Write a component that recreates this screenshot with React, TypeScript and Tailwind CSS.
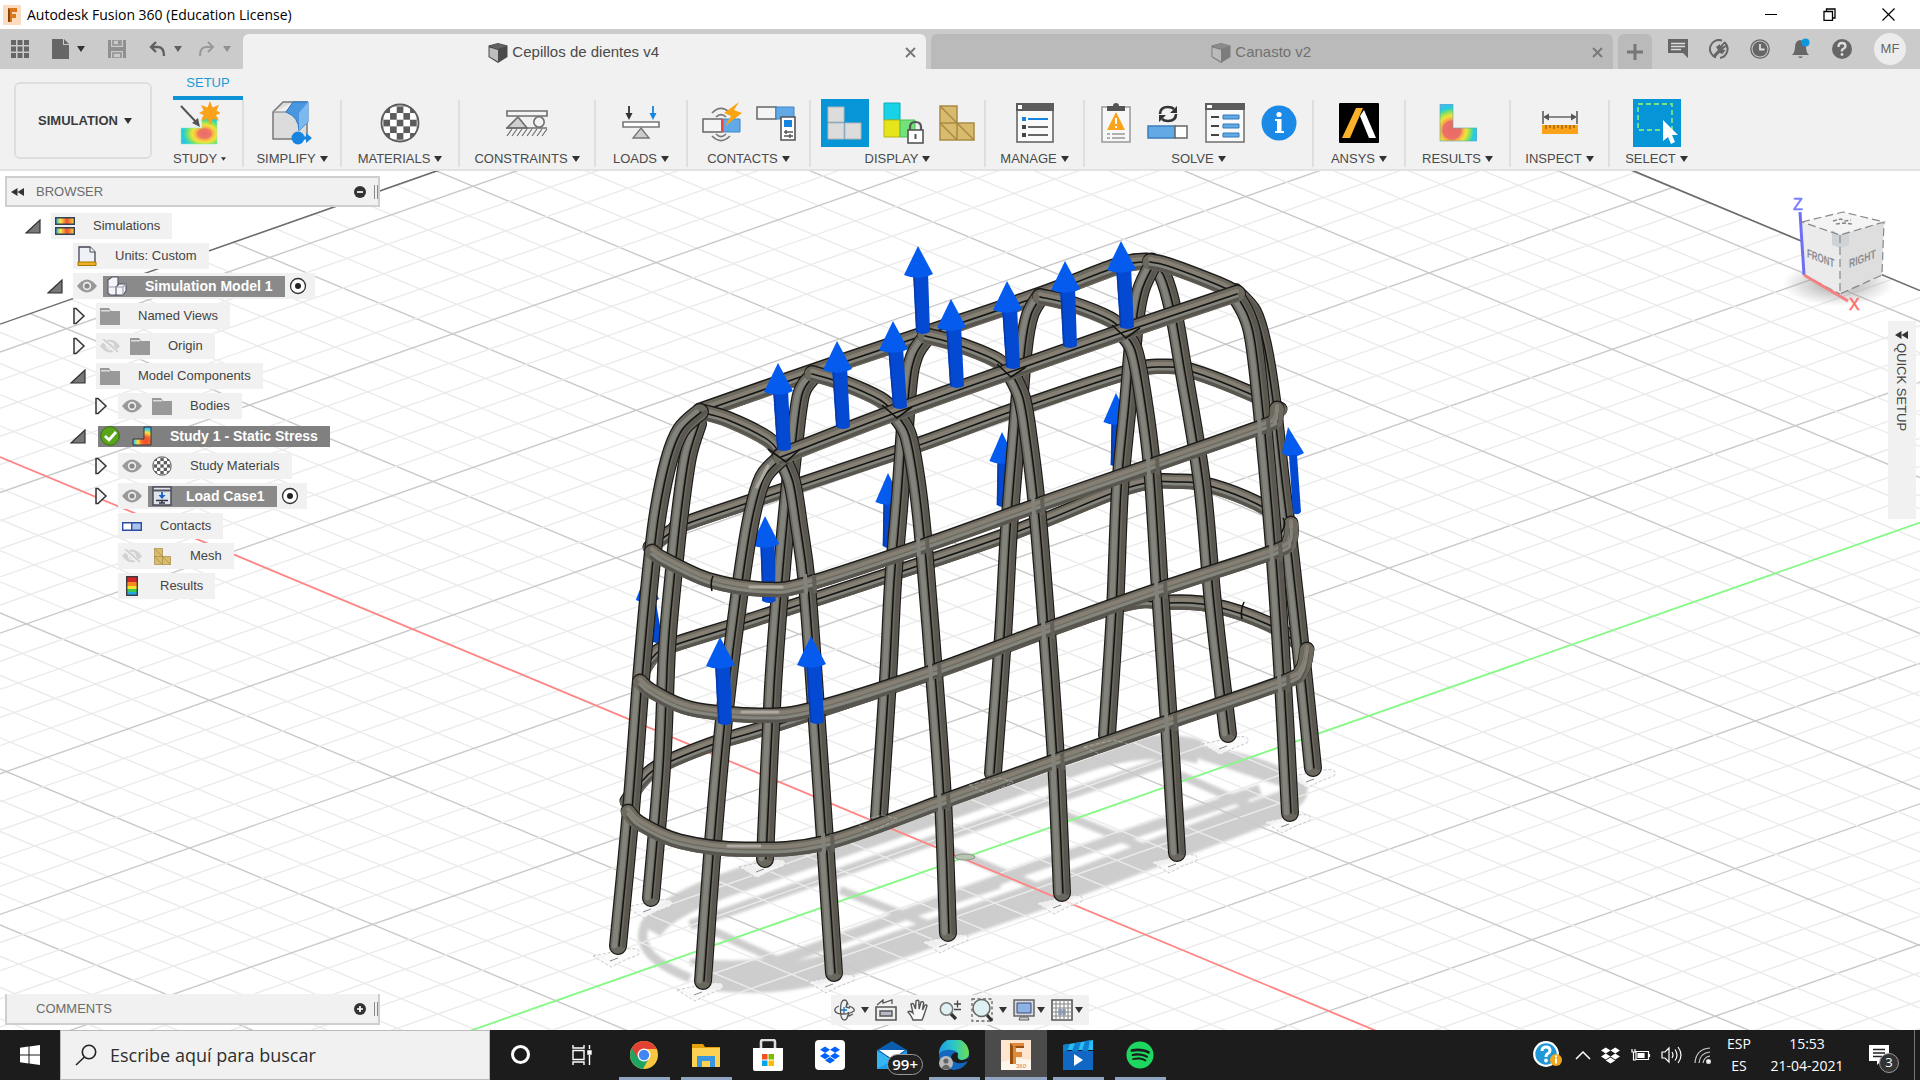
import React from "react";
import { FaDropbox, FaSpotify } from "react-icons/fa";

type Pt = [number, number];

/* ---------- geometry helpers for the 3D viewport ---------- */

function smooth(p: Pt[]): string {
  let d = `M${p[0][0]} ${p[0][1]}`;
  for (let i = 0; i < p.length - 1; i++) {
    const a = p[i - 1] || p[i];
    const b = p[i];
    const c = p[i + 1];
    const e = p[i + 2] || c;
    d += `C${b[0] + (c[0] - a[0]) / 6} ${b[1] + (c[1] - a[1]) / 6} ${c[0] - (e[0] - b[0]) / 6} ${c[1] - (e[1] - b[1]) / 6} ${c[0]} ${c[1]}`;
  }
  return d;
}

const BACK_POSTS: Pt[][] = [
  [[1228, 734], [1213, 603], [1202, 483], [1183, 367], [1173, 310], [1163, 276], [1152, 264]],
  [[1107, 735], [1115, 610], [1120, 490], [1128, 403], [1135, 323], [1141, 290], [1152, 266]],
  [[993, 773], [1003, 637], [1009, 530], [1017, 430], [1024, 347], [1030, 315], [1040, 297]],
  [[879, 817], [888, 680], [893, 583], [900, 497], [908, 390], [914, 357], [924, 340]],
  [[765, 859], [773, 687], [781, 580], [787, 513], [794, 447], [801, 395], [812, 377]],
  [[651, 898], [662, 767], [667, 650], [673, 580], [680, 513], [688, 457], [698, 424]],
];
const RIGHT_BACK_POST: Pt[] = [[1313, 768], [1303, 670], [1291, 560], [1281, 480], [1272, 400], [1263, 345], [1253, 312], [1235, 292]];
const FRONT_POSTS: Pt[][] = [
  [[618, 946], [631, 810], [641, 680], [650, 580], [658, 513], [669, 460], [681, 430], [700, 412]],
  [[1290, 813], [1283, 682], [1275, 560], [1263, 423], [1254, 343], [1247, 316], [1236, 296]],
  [[1177, 853], [1169, 723], [1160, 590], [1152, 467], [1142, 390], [1134, 350], [1123, 333]],
  [[1062, 893], [1056, 760], [1047, 630], [1037, 507], [1029, 440], [1022, 398], [1010, 372]],
  [[948, 933], [943, 800], [934, 673], [924, 547], [917, 483], [908, 435], [895, 414]],
  [[834, 973], [825, 840], [816, 708], [807, 585], [799, 525], [792, 482], [781, 456]],
  [[703, 981], [713, 843], [725, 710], [740, 590], [751, 520], [763, 478], [781, 458]],
];
const BACK_RINGS: Pt[][] = [
  [[650, 548], [672, 532], [700, 519], [900, 452], [1010, 412], [1127, 373], [1163, 367], [1190, 371], [1248, 393], [1280, 410]],
  [[641, 675], [653, 657], [672, 646], [760, 618], [1000, 538], [1127, 488], [1180, 482], [1213, 487], [1257, 504], [1290, 525]],
  [[627, 802], [643, 780], [663, 765], [717, 743], [767, 728], [933, 673], [1113, 608], [1167, 603], [1213, 606], [1267, 624], [1300, 645]],
];
const FRONT_RINGS: Pt[][] = [
  [[652, 552], [664, 560], [710, 581], [767, 590], [809, 584], [922, 547], [1037, 506], [1152, 466], [1263, 427], [1275, 420], [1277, 409]],
  [[640, 682], [652, 692], [690, 709], [760, 716], [816, 709], [934, 672], [1047, 630], [1160, 590], [1275, 552], [1290, 540], [1291, 524]],
  [[628, 812], [640, 824], [680, 842], [745, 850], [827, 843], [943, 802], [1057, 761], [1170, 722], [1283, 683], [1302, 670], [1307, 650]],
];
const TOP_FAR: Pt[] = [[700, 412], [812, 373], [925, 335], [1040, 296], [1120, 266], [1152, 262]];
const TOP_NEAR: Pt[] = [[781, 457], [895, 413], [1010, 372], [1124, 332], [1237, 294]];
const CROSS: Pt[][] = [
  [[700, 412], [728, 420], [768, 440], [782, 457]],
  [[812, 374], [842, 383], [880, 400], [895, 414]],
  [[925, 336], [955, 344], [995, 360], [1010, 373]],
  [[1040, 297], [1070, 304], [1110, 320], [1124, 333]],
  [[1150, 262], [1168, 266], [1218, 285], [1238, 295]],
];

function Post({ p }: { p: Pt[] }) {
  const d = smooth(p);
  return (
    <g fill="none" strokeLinecap="round">
      <path d={d} stroke="#1d1c1a" strokeWidth="18" />
      <path d={d} stroke="#6a675f" strokeWidth="15.500" />
      <path d={d} stroke="#82847b" strokeWidth="5" transform="translate(-3.500 0)" />
      <path d={d} stroke="#5a574f" strokeWidth="4" transform="translate(5.500 0)" />
      <path d={d} stroke="#121211" strokeWidth="1.500" transform="translate(1 0)" />
    </g>
  );
}

function Rail({ p, seam = true, w = 15 }: { p: Pt[]; seam?: boolean; w?: number }) {
  const d = smooth(p);
  return (
    <g fill="none" strokeLinecap="round">
      <path d={d} stroke="#1d1c1a" strokeWidth={w} transform="translate(0 -1)" />
      <path d={d} stroke="#6d695f" strokeWidth={w - 1} />
      <path d={d} stroke="#857f74" strokeWidth="4" transform="translate(0 -3)" />
      <path d={d} stroke="#57554e" strokeWidth="4" transform="translate(0 5)" />
      <path d={d} stroke="#84857c" strokeWidth="3" transform="translate(0 2)" />
      {seam && <path d={d} stroke="#151514" strokeWidth="1.500" />}
    </g>
  );
}

function Arrow({ t, b, s = 1 }: { t: Pt; b: Pt; s?: number }) {
  const [x, y] = t;
  const h = 29;
  return (
    <g>
      <path d={`M${x - 5 * s} ${y + 26}L${b[0] - 7 * s} ${b[1]}q${7 * s} 4 ${14 * s} 0L${x + 10 * s} ${y + 26}z`} fill="#0349d2" />
      <path d={`M${x - 4 * s} ${y + 28}L${b[0] - 6 * s} ${b[1]}`} stroke="#0b3aa6" strokeWidth="1.500" />
      <path d={`M${x} ${y}L${x - 14 * s} ${y + h}q${14 * s} 6 ${29 * s} -1z`} fill="#045bee" />
    </g>
  );
}

function Grid() {
  const lines: React.ReactNode[] = [];
  for (let i = -30; i <= 31; i++) {
    const major = i % 5 === 0;
    if (i === 0) continue;
    const col = i === 31 ? "#6f6f6f" : major ? "#c9c9c9" : "#ebebeb";
    const w = i === 31 ? 2 : 1.4;
    const g = 1195.6 - 28.12 * i;
    const r = 457 - 31.2 * i;
    lines.push(<path key={`g${i}`} d={`M0 ${g}L1920 ${g - 673}`} stroke={col} strokeWidth={w} />);
    lines.push(<path key={`r${i}`} d={`M0 ${r}L1920 ${r + 800.6}`} stroke={col} strokeWidth={w} />);
  }
  return (
    <g clipPath="url(#floor)">
      {lines}
      <path d="M0 457L1920 1257.6" stroke="#ff8484" strokeWidth="1.800" />
      <path d="M0 1195.600L1920 522.600" stroke="#84f984" strokeWidth="1.800" />
    </g>
  );
}

function Scene() {
  const feet: Pt[] = [[619, 957], [703, 991], [834, 983], [948, 943], [1062, 904], [1177, 863], [1290, 823], [1315, 778], [1228, 745], [765, 868], [652, 908]];
  const ghosts: Pt[] = [[877, 824], [993, 787], [1108, 749]];
  return (
    <svg viewBox="0 171 1920 859" preserveAspectRatio="xMidYMid slice" className="absolute inset-0 h-full w-full" role="img" aria-label="Wire frame model on grid">
      <defs>
        <clipPath id="floor"><path d="M-10 327L1088 -59L1930 294V1100H-10z" /></clipPath>
        <filter id="soft" x="-20%" y="-20%" width="140%" height="140%"><feGaussianBlur stdDeviation="1.500" /></filter>
        <radialGradient id="cubeShadow"><stop offset="0" stopColor="#8a8a8a" stopOpacity=".8" /><stop offset="1" stopColor="#999" stopOpacity="0" /></radialGradient>
      </defs>
      <rect y="171" width="1920" height="859" fill="#fff" />
      <g fill="none" stroke="#cdcdcd" filter="url(#soft)">
        <path d="M700 974Q770 988 850 962L1062 888L1290 802" strokeWidth="28" />
        <path d="M650 930Q665 905 740 880L880 832L1080 762Q1150 738 1200 752" strokeWidth="24" />
        <path d="M1150 745Q1260 755 1300 785Q1306 798 1285 808" strokeWidth="12" />
        <path d="M645 925Q632 955 690 978" strokeWidth="9" />
        <path d="M690 925L870 862L1170 760" strokeWidth="10" />
        <path d="M770 965L1030 868L1260 790" strokeWidth="11" />
        <path d="M690 962Q760 968 790 955L1000 885" strokeWidth="7" />
        <path d="M700 925L790 966M840 890L930 925M950 850L1040 888M1065 815L1150 850M1180 775L1270 815M1200 755L1290 785" strokeWidth="8" />
      </g>
      <Grid />
      <g stroke="#c9c9c9" fill="#fafafa" fillOpacity=".75" strokeDasharray="3 2">
        {feet.map(([x, y], i) => (
          <g key={i}>
            <path d={`M${x - 26} ${y - 1}L${x + 8} ${y - 8}Q${x + 24} ${y - 10} ${x + 19} ${y - 2}L${x + 6} ${y + 3}L${x - 8} ${y + 10}z`} />
            <path d={`M${x - 9} ${y + 4}L${x - 1} ${y + 1}`} stroke="#888" strokeDasharray="none" />
          </g>
        ))}
      </g>
      <ellipse cx="965" cy="857" rx="10" ry="3" fill="#b5c5b0" stroke="#8b968b" />

      <Arrow t={[647, 571]} b={[657, 641]} s={0.8} />
      {BACK_RINGS.map((p, i) => <Rail key={i} p={p} w={15} />)}
      <Arrow t={[888, 473]} b={[889, 546]} s={0.9} />
      <Arrow t={[1002, 432]} b={[1003, 505]} s={0.9} />
      <Arrow t={[1116, 393]} b={[1117, 465]} s={0.9} />
      <Rail p={TOP_FAR} w={17} />
      {BACK_POSTS.map((p, i) => <Post key={i} p={p} />)}
      <Post p={RIGHT_BACK_POST} />
      <Arrow t={[765, 516]} b={[769, 601]} s={0.95} />
      {CROSS.map((p, i) => <Rail key={i} p={p} w={16} />)}
      {FRONT_POSTS.map((p, i) => <Post key={i} p={p} />)}
      <Rail p={TOP_NEAR} w={17} />
      {FRONT_RINGS.map((p, i) => <Rail key={i} p={p} seam={false} w={15} />)}
      {FRONT_RINGS.map((r, i) =>
        [4, 5, 6, 7, 8].map((k) => (
          <g key={`${i}-${k}`}>
            <path d={`M${r[k][0] - 4} ${r[k][1] - 10}l1 20`} stroke="#82847b" strokeWidth="4" />
            <path d={`M${r[k][0] + 5} ${r[k][1] - 9}l1 18`} stroke="#625f58" strokeWidth="4" />
          </g>
        )),
      )}
      <g stroke="#d5d5d5" strokeOpacity=".45" fill="none" strokeDasharray="4 2">
        {ghosts.map(([x, y], i) => <path key={i} d={`M${x - 24} ${y - 2}L${x + 6} ${y - 9}L${x + 20} ${y - 5}L${x - 4} ${y + 7}z`} />)}
      </g>
      <g stroke="#121211" strokeWidth="1.600" fill="none">
        <path d="M713 576q-3 6 -1 15M1244 602q-4 8-2 17M1283 518q4 6-2 15" />
        <path d="M768 449L786 462L800 449M882 405L897 418L912 407M997 364L1011 377L1026 367M1112 325L1126 338L1140 328" />
      </g>
      <g stroke="#aeaaa2" strokeWidth="3" strokeLinecap="round" fill="none">
        <path d="M750 587h32M742 712h36M728 846h32" />
        <path d="M757 487L768 466" />
      </g>
      <Arrow t={[918, 246]} b={[923, 332]} />
      <Arrow t={[951, 299]} b={[957, 386]} />
      <Arrow t={[893, 321]} b={[900, 407]} />
      <Arrow t={[837, 341]} b={[843, 427]} />
      <Arrow t={[778, 363]} b={[784, 449]} />
      <Arrow t={[1007, 281]} b={[1013, 367]} />
      <Arrow t={[1065, 261]} b={[1070, 346]} />
      <Arrow t={[1121, 241]} b={[1127, 327]} />
      <Arrow t={[720, 637]} b={[725, 723]} />
      <Arrow t={[811, 636]} b={[817, 722]} />
      <path d="M1288 427L1282 453Q1292 460 1304 453z" fill="#045bee" />
      <path d="M1289 455L1293 513Q1298 516 1301 512L1297 455z" fill="#0349d2" />

      <ellipse cx="1838" cy="284" rx="56" ry="22" fill="url(#cubeShadow)" />
      <path d="M1802 222L1843 212L1884 222L1840 235z" fill="#f4f4f4" />
      <path d="M1802 222L1840 235V294L1804 275z" fill="#ebebeb" />
      <path d="M1840 235L1884 222L1882 275L1840 294z" fill="#dedede" />
      <path d="M1832 230l8 5 9-4v14l-9 3-8-3z" fill="#cfd2d6" />
      <path d="M1802 222L1843 212L1884 222L1840 235zM1840 235V294L1882 275L1884 222M1804 275L1840 294" fill="none" stroke="#888" strokeWidth="1.200" strokeDasharray="8 4" />
      <path d="M1833 221l8-2 4 2 6-1M1836 224l8-1 8 1" stroke="#888" strokeWidth="1.500" fill="none" strokeDasharray="4 2" />
      <path d="M1800 212L1804 275" stroke="#6f6ff5" strokeWidth="3" />
      <path d="M1804 275L1848 301" stroke="#f58080" strokeWidth="3" />
      <g fontFamily="Liberation Sans, sans-serif">
        <text x="1793" y="210" fontSize="16" fill="#7a7aff" stroke="#7a7aff" strokeWidth=".5">Z</text>
        <text x="1849" y="310" fontSize="16" fill="#ff6e6e" stroke="#ff6e6e" strokeWidth=".5">X</text>
        <text transform="matrix(.72 .28 0 1.100 1807 257)" fontSize="11" fontWeight="bold" fill="#8a8d92">FRONT</text>
        <text transform="matrix(.78 -.3 0 1.100 1849 268)" fontSize="11" fontWeight="bold" fill="#8a8d92">RIGHT</text>
      </g>
    </svg>
  );
}

/* ---------- shared icon pieces ---------- */

function Rainbow({ id }: { id: string }) {
  return (
    <radialGradient id={id} cx=".65" cy=".6" r=".75">
      <stop offset="0" stopColor="#ea6a6a" /><stop offset=".25" stopColor="#ee7a62" /><stop offset=".3" stopColor="#f9a94a" />
      <stop offset=".45" stopColor="#f5e23a" /><stop offset=".6" stopColor="#8ee05a" /><stop offset=".78" stopColor="#22d0d8" /><stop offset="1" stopColor="#4aa8f0" />
    </radialGradient>
  );
}

function Caret({ className = "text-[#333]" }: { className?: string }) {
  return <svg width="8" height="6" viewBox="0 0 8 6" className={className}><path d="M0 0h8L4 6z" fill="currentColor" /></svg>;
}

function Checker({ size }: { size: number }) {
  const cells: React.ReactNode[] = [];
  for (let r = 0; r < 7; r++) for (let c = 0; c < 7; c++) if ((r + c) % 2 === 0) cells.push(<rect key={`${r}-${c}`} x={c * 6.67 - 3.3} y={r * 6.67 - 3.3} width="6.670" height="6.670" fill="#5c5c5c" />);
  return (
    <svg width={size} height={size} viewBox="0 0 40 40">
      <clipPath id={`ball${size}`}><circle cx="20" cy="20" r="19" /></clipPath>
      <circle cx="20" cy="20" r="19" fill="#fff" />
      <g clipPath={`url(#ball${size})`}>{cells}</g>
      <circle cx="20" cy="20" r="18.500" fill="none" stroke="#5c5c5c" strokeWidth="1.800" />
    </svg>
  );
}

function Mesh({ s }: { s: number }) {
  return (
    <svg width={s} height={s} viewBox="0 0 36 36" fill="#d8bb6c" stroke="#a88a45" strokeWidth="1.500">
      <path d="M1 1h17v17h17v17H1z" /><path d="M1 18h17v17M1 1l34 34M1 18l17 17" fill="none" />
    </svg>
  );
}

const IcStudy = (
  <svg width="40" height="44" viewBox="0 0 40 44">
    <defs><Rainbow id="rs" /></defs>
    <path d="M1 27h21V17h15v26H1z" fill="url(#rs)" stroke="#7fa" strokeWidth=".5" />
    <path d="M1 5L17 22" stroke="#555" strokeWidth="2" /><path d="M20 26l-8-4 6-5z" fill="#555" />
    <path d="M30 0l2.500 6.500L39 4l-2.500 5.500L41 12l-5 2 3 6-6-2.500-3 6.500-2.500-6.500-6.500 2.500 2.500-6-4.500-2 4.500-2.500L21 4l6.500 2.500z" fill="#f9a21a" />
  </svg>
);
const IcSimplify = (
  <svg width="40" height="44" viewBox="0 0 40 44">
    <path d="M1 11L11 1h24v36l-8 1H1z" fill="#dcdcdc" stroke="#777" strokeWidth="1.500" />
    <path d="M1 11h13L22 1" fill="#eee" stroke="#777" />
    <path d="M14 11L21 1h15v20l-9 9q0-14-13-19z" fill="#4a97e0" stroke="#2775c4" /><path d="M27 12l9-11v20l-9 9z" fill="#7db9ef" />
    <circle cx="26" cy="37" r="6.500" fill="#1785e0" /><path d="M26 35.500h8V32l6 5-6 5v-3.500h-8z" fill="#1785e0" />
  </svg>
);
const IcConstraints = (
  <svg width="42" height="30" viewBox="0 0 42 30" fill="none" stroke="#6e6e6e" strokeWidth="1.600">
    <path d="M1 3h40v5H1z" fill="#f4f4f4" /><path d="M1 20L12 9l9 11z" fill="#cfcfcf" /><circle cx="33" cy="14" r="5.200" fill="#f4f4f4" /><path d="M0 20h41" />
    <path d="M1 28l5-7M6 28l5-7M11 28l5-7M16 28l5-7M21 28l5-7M26 28l5-7M31 28l5-7M36 28l5-7" strokeWidth="1.200" />
  </svg>
);
const IcLoads = (
  <svg width="38" height="34" viewBox="0 0 38 34">
    <path d="M1 16h36v5H1z" fill="#fff" stroke="#777" strokeWidth="1.600" /><path d="M19 22l8 10H11z" fill="#ccc" stroke="#777" strokeWidth="1.400" />
    <path d="M7 0v9" stroke="#333" strokeWidth="1.800" /><path d="M3.500 7h7L7 14z" fill="#333" />
    <path d="M31 0v9" stroke="#1785e0" strokeWidth="1.800" /><path d="M27.500 7h7L31 14z" fill="#1785e0" />
  </svg>
);
const IcContacts1 = (
  <svg width="40" height="42" viewBox="0 0 40 42" fill="none">
    <path d="M1 17h19v13H1z" fill="#f4f4f4" stroke="#666" strokeWidth="1.500" /><path d="M21 17h17v13H21z" fill="#62aae6" stroke="#3d86c6" /><path d="M20 17v13" stroke="#e44" strokeWidth="2" />
    <path d="M10 11q9-9 18 0M14 15q5-5 10 0M10 34q9 9 18 0M14 32q5 5 10 0" stroke="#777" strokeWidth="1.700" />
    <path d="M37 0L22 11l7 3-6 10 17-13-8-3z" fill="#fca311" />
  </svg>
);
const IcContacts2 = (
  <svg width="40" height="38" viewBox="0 0 40 38" fill="none">
    <path d="M1 3h19v12H1z" fill="#f4f4f4" stroke="#666" strokeWidth="1.500" /><path d="M20 3h18v12H20z" fill="#62aae6" stroke="#3d86c6" />
    <path d="M25 13h14v23H25z" fill="#fff" stroke="#555" strokeWidth="1.600" /><path d="M28 16h8v7h-8z" fill="#1785e0" /><path d="M28 28h9M28 32h9M30 26v4M34 30v4" stroke="#555" strokeWidth="1.500" />
  </svg>
);
const IcDisplay1 = (
  <span className="flex h-12 w-12 items-center justify-center bg-[#0696d7]">
    <svg width="36" height="34" viewBox="0 0 36 34" fill="#dcdcdc" stroke="#b5b5b5"><path d="M1 1h16v15H1zM1 17h16v16H1zM18 17h16v16H18z" /></svg>
  </span>
);
const IcDisplay2 = (
  <svg width="42" height="42" viewBox="0 0 42 42">
    <path d="M1 1h16v17H1z" fill="#18d3e6" stroke="#0da9ba" /><path d="M1 18h16v17H1z" fill="#e6e41b" stroke="#b8b612" /><path d="M17 18h15v17H17z" fill="#74e27a" stroke="#4dbf56" />
    <rect x="25" y="28" width="15" height="13" fill="#fff" stroke="#555" strokeWidth="1.600" /><path d="M27 28v-3q0-5 5.500-5t5.500 5v3" fill="none" stroke="#555" strokeWidth="2.200" /><path d="M32.500 32v5" stroke="#555" strokeWidth="2" />
  </svg>
);
const IcManage = (
  <svg width="38" height="40" viewBox="0 0 38 40">
    <rect x="1" y="1" width="36" height="38" fill="#fafafa" stroke="#666" strokeWidth="1.600" /><path d="M0 0h38v8H0z" fill="#5c5c5c" /><path d="M2 2h4v4H2z" fill="#fff" />
    <path d="M6 14h4v4H6z" fill="#1785e0" /><path d="M12 16h20" stroke="#1785e0" strokeWidth="2" /><path d="M6 22h4v4H6zM6 30h4v4H6z" fill="#444" /><path d="M12 24h20M12 32h20" stroke="#666" strokeWidth="2" />
  </svg>
);
const IcClip = (
  <svg width="30" height="40" viewBox="0 0 30 40">
    <rect x="1" y="4" width="28" height="35" fill="#f7f7f7" stroke="#999" strokeWidth="1.500" /><path d="M6 3h6q0-3 3-3t3 3h6v5H6z" fill="#555" />
    <path d="M15 9l9 18H6z" fill="#f9a21a" /><path d="M15 15v6M15 23v2" stroke="#fff" strokeWidth="2" /><path d="M6 31h3M6 35h3M11 31h13M11 35h13" stroke="#999" strokeWidth="1.500" />
  </svg>
);
const IcSolve = (
  <svg width="42" height="36" viewBox="0 0 42 36" fill="none">
    <path d="M1 21h27v12H1z" fill="#62aae6" stroke="#3d7db8" strokeWidth="1.500" /><path d="M28 21h12v12H28z" fill="#fff" stroke="#666" strokeWidth="1.500" />
    <path d="M13 9q0-7 8-7 4 0 6 2M29 9q0 7-8 7-4 0-6-2" stroke="#333" strokeWidth="2.600" /><path d="M30 1v7h-7zM12 17v-7h7z" fill="#333" />
  </svg>
);
const IcTable = (
  <svg width="40" height="40" viewBox="0 0 40 40">
    <rect x="1" y="1" width="38" height="38" fill="#fafafa" stroke="#777" strokeWidth="1.600" /><path d="M0 0h40v7H0z" fill="#5c5c5c" /><path d="M2 2h5v3H2z" fill="#fff" />
    <path d="M6 14h8M6 23h8M6 32h8" stroke="#444" strokeWidth="1.800" /><path d="M18 12h16v4H18zM18 21h16v4H18zM18 30h16v4H18z" fill="#62aae6" stroke="#3678b4" />
  </svg>
);
const IcInfo = (
  <svg width="36" height="36" viewBox="0 0 36 36"><circle cx="18" cy="18" r="17.500" fill="#1a8ae6" /><path d="M14 14h6.500v12H23v2h-9v-2h2V16h-2z" fill="#fff" /><circle cx="18" cy="9.500" r="2.600" fill="#fff" /></svg>
);
const IcAnsys = (
  <svg width="40" height="40" viewBox="0 0 40 40"><rect width="40" height="40" rx="1" fill="#000" /><path d="M3 35L17 5h7L11 35z" fill="#fcb12b" /><path d="M21 13l4-6 12 28h-7z" fill="#fff" /></svg>
);
const IcResults = (
  <svg width="38" height="38" viewBox="0 0 38 38"><defs><radialGradient id="rr" gradientUnits="userSpaceOnUse" cx="13" cy="26" r="26"><stop offset="0" stopColor="#ea6a6a" /><stop offset=".35" stopColor="#ea7066" /><stop offset=".4" stopColor="#f8a54a" /><stop offset=".55" stopColor="#f0e43a" /><stop offset=".72" stopColor="#7ede66" /><stop offset=".85" stopColor="#20cfe0" /><stop offset="1" stopColor="#4ab8f0" /></radialGradient></defs><path d="M1 0h13v24h24v13H1z" fill="url(#rr)" stroke="#5aa" strokeWidth=".6" /></svg>
);
const IcInspect = (
  <svg width="36" height="24" viewBox="0 0 36 24"><path d="M1 0v13M35 0v13M3 6h30" stroke="#666" strokeWidth="1.700" /><path d="M1 6l6-3.500v7zM35 6l-6-3.500v7z" fill="#555" /><path d="M0 14h36v9H0z" fill="#f9a21a" /><path d="M4 14v4M8 14v3M12 14v4M16 14v3M20 14v4M24 14v3M28 14v4M32 14v3" stroke="#7a4a00" /></svg>
);
const IcSelect = (
  <span className="flex h-12 w-12 items-center justify-center bg-[#0696d7]">
    <svg width="44" height="44" viewBox="0 0 44 44"><path d="M3 3h34v26H3z" fill="none" stroke="#7be08a" strokeWidth="1.800" strokeDasharray="5 3" /><path d="M28 19v21l5-4 3 7 4-2-3-7h6z" fill="#fff" /></svg>
  </span>
);

const GROUPS: { label: string; w: string; icons: React.ReactNode[]; last?: boolean }[] = [
  { label: "STUDY", w: "w-[71px] pr-4", icons: [IcStudy] },
  { label: "SIMPLIFY", w: "w-[98px]", icons: [IcSimplify] },
  { label: "MATERIALS", w: "w-[118px]", icons: [<Checker size={40} />] },
  { label: "CONSTRAINTS", w: "w-[136px]", icons: [IcConstraints] },
  { label: "LOADS", w: "w-[92px]", icons: [IcLoads] },
  { label: "CONTACTS", w: "w-[123px]", icons: [IcContacts1, IcContacts2] },
  { label: "DISPLAY", w: "w-[175px]", icons: [IcDisplay1, IcDisplay2, <Mesh s={36} />] },
  { label: "MANAGE", w: "w-[99px]", icons: [IcManage] },
  { label: "SOLVE", w: "w-[229px]", icons: [IcClip, IcSolve, IcTable, IcInfo] },
  { label: "ANSYS", w: "w-[92px]", icons: [IcAnsys] },
  { label: "RESULTS", w: "w-[105px]", icons: [IcResults] },
  { label: "INSPECT", w: "w-[99px]", icons: [IcInspect] },
  { label: "SELECT", w: "w-[93px]", icons: [IcSelect], last: true },
];

function Cube({ light = false }: { light?: boolean }) {
  return (
    <svg width="20" height="20" viewBox="0 0 20 20" opacity={light ? 0.55 : 1}>
      <path d="M10 0l9.500 2.500V14L10 20 .5 14V2.500z" fill="#4a4a4a" /><path d="M1.500 4.500L10 7v11.500L1.500 13.500z" fill="#bdbdbd" /><path d="M1 3l9-2.500L19 3l-9 3z" fill="#636363" />
    </svg>
  );
}

function TitleBar() {
  return (
    <header className="flex h-[29px] shrink-0 items-center bg-white pl-[3px] text-black">
      <svg width="18" height="20" viewBox="0 0 18 20"><rect width="18" height="20" fill="#fbdcc0" /><path d="M5 3h9v4H9v2h4v4H9v4H5z" fill="#d9771c" /><path d="M5 3l2 2v12H5z" fill="#8a4308" /></svg>
      <h1 className="ml-1.5 flex-1 font-['Open_Sans',sans-serif] text-[14px]">Autodesk Fusion 360 (Education License)</h1>
      <button aria-label="Minimize" className="flex w-[59px] justify-center"><svg width="12" height="12" viewBox="0 0 12 12"><path d="M0 5.500h12" stroke="#000" /></svg></button>
      <button aria-label="Restore" className="flex w-[59px] justify-center"><svg width="13" height="13" viewBox="0 0 13 13" fill="none" stroke="#000" strokeWidth="1.300"><path d="M1 3.500h8.500v9H1zM3.500 3.500V1H12v9H9.500" /></svg></button>
      <button aria-label="Close" className="mr-0.5 flex w-[59px] justify-center"><svg width="13" height="13" viewBox="0 0 13 13"><path d="M.5.5l12 12M12.500.5l-12 12" stroke="#000" strokeWidth="1.200" /></svg></button>
    </header>
  );
}

function TabBar() {
  const btn = "flex w-[41px] justify-center";
  return (
    <div className="flex h-10 shrink-0 bg-[#cbcbcb] pt-[5px] text-[#6a6a6a]">
      <div className="flex w-[243px] items-center pb-1.5 pl-[11px]">
        <button aria-label="Data panel"><svg width="18" height="18" viewBox="0 0 18 18" fill="#666"><path d="M0 0h5v5H0zM6.500 0h5v5h-5zM13 0h5v5h-5zM0 6.500h5v5H0zM6.500 6.500h5v5h-5zM13 6.500h5v5h-5zM0 13h5v5H0zM6.500 13h5v5h-5zM13 13h5v5h-5z" /></svg></button>
        <button aria-label="File" className="ml-[23px] flex items-center gap-2"><svg width="17" height="20" viewBox="0 0 17 20" fill="#666"><path d="M0 0h11v6h6v14H0z" /><path d="M12 0l5 5h-5z" /></svg><Caret /></button>
        <button aria-label="Save" className="ml-[23px]"><svg width="18" height="18" viewBox="0 0 18 18" fill="#909090"><path d="M0 0h3v7h12V0h3v18h-3v-7H3v7H0z" /><path d="M5 0h8v5H5zM5 13h8v5H5z" fill="none" stroke="#909090" strokeWidth="1.600" /><path d="M10 1h2v3h-2z" /></svg></button>
        <button aria-label="Undo" className="ml-[23px] flex items-center gap-2 text-[#606060]"><svg width="17" height="16" viewBox="0 0 17 16" fill="none" stroke="#606060" strokeWidth="2.400"><path d="M7 1L2 6l5 5M2 6h7q6 0 6 9" /></svg><Caret className="text-[#606060]" /></button>
        <button aria-label="Redo" className="ml-4 flex items-center gap-2"><svg width="17" height="16" viewBox="0 0 17 16" fill="none" stroke="#999" strokeWidth="2"><path d="M10 1l5 5-5 5M15 6H8q-6 0-6 9" /></svg><Caret className="text-[#909090]" /></button>
      </div>
      <div className="mr-[5px] flex flex-1 items-center rounded-t-md bg-[#f1f1f1] pr-2.5 pt-0.5 text-[15px] text-[#4a4a4a]">
        <span className="flex flex-1 items-center justify-center gap-1"><Cube />Cepillos de dientes v4</span>
        <button aria-label="Close tab"><svg width="11" height="11" viewBox="0 0 11 11"><path d="M1 1l9 9M10 1l-9 9" stroke="#777" strokeWidth="1.800" /></svg></button>
      </div>
      <div className="mr-[5px] flex flex-1 items-center rounded-t-md bg-[#bababa] pr-2.5 pt-0.5 text-[15px] text-[#707070]">
        <span className="flex flex-1 items-center justify-center gap-1"><Cube light />Canasto v2</span>
        <button aria-label="Close tab"><svg width="11" height="11" viewBox="0 0 11 11"><path d="M1 1l9 9M10 1l-9 9" stroke="#777" strokeWidth="1.800" /></svg></button>
      </div>
      <button aria-label="New tab" className="flex w-[34px] items-center justify-center rounded-t-md bg-[#bababa]"><svg width="16" height="16" viewBox="0 0 16 16"><path d="M8 0v16M0 8h16" stroke="#777" strokeWidth="3" /></svg></button>
      <div className="flex w-[268px] items-center pb-1.5 pl-[5px]">
        <button aria-label="Comments" className={btn}><svg width="20" height="19" viewBox="0 0 20 19"><path d="M0 0h20v19l-5-5H0z" fill="#666" /><path d="M3 4.500h14M3 7.500h14M3 10.500h10" stroke="#ddd" strokeWidth="1.300" /></svg></button>
        <button aria-label="Extensions" className={btn}><svg width="20" height="20" viewBox="0 0 20 20"><path d="M7 18.500A9 9 0 0 1 13 1.500M15 3A9 9 0 0 1 11 19" fill="none" stroke="#666" strokeWidth="2" /><path d="M3 17L9 11 7 8l4-3v2l4-4 1 1-3 4 4-2 .5 1.500-4 3 3 .5-3 4-3-1-5 5z" fill="#666" /></svg></button>
        <button aria-label="Job status" className={btn}><svg width="20" height="20" viewBox="0 0 20 20"><circle cx="10" cy="10" r="9.200" fill="none" stroke="#666" strokeWidth="1.300" /><circle cx="10" cy="10" r="7.500" fill="#666" /><path d="M10 5v5.500h4.500" stroke="#ddd" strokeWidth="1.800" fill="none" /></svg></button>
        <button aria-label="Notifications" className={btn}><svg width="20" height="21" viewBox="0 0 20 21"><path d="M9 2q6 1 6 7 0 5 3 8H1q3-3 3-8 0-6 5-7zM7 18.500h5q-2.500 3-5 0z" fill="#666" /><circle cx="14.500" cy="4.500" r="4" fill="#0e97e0" /></svg></button>
        <button aria-label="Help" className={btn}><svg width="20" height="20" viewBox="0 0 20 20"><circle cx="10" cy="10" r="10" fill="#666" /><path d="M6.500 8q0-4 3.500-4t3.500 3.200q0 1.600-2 2.600T10 12.500" stroke="#ddd" strokeWidth="2.300" fill="none" /><circle cx="10" cy="15.500" r="1.400" fill="#ddd" /></svg></button>
        <button className="ml-3 flex h-8 w-8 items-center justify-center rounded-full bg-[#ececec] text-[13px] text-[#666]">MF</button>
      </div>
    </div>
  );
}

function Ribbon() {
  return (
    <div className="flex h-[102px] shrink-0 border-b-2 border-[#e2e2e2] bg-[#f1f1f1] pl-3.5">
      <button className="mt-[13px] flex h-[77px] w-[138px] items-center justify-center gap-1.5 rounded-md border-2 border-[#dedede] pl-1 text-[13px] font-bold text-[#3c3c3c]">SIMULATION <Caret /></button>
      <div className="ml-[21px] flex flex-1 flex-col">
        <button className="flex h-[31px] w-[70px] items-center justify-center border-b-4 border-[#0f92d6] text-[13px] text-[#1a9bd7]">SETUP</button>
        <div className="flex h-[67px]">
          {GROUPS.map((g) => (
            <section key={g.label} className={`flex flex-col ${g.w} ${g.last ? "" : "border-r-2 border-[#dfdfdf]"}`}>
              <div className={`flex h-[45px] items-center justify-center ${g.icons.length < 4 ? "gap-3.5" : "gap-4"}`}>
                {g.icons.map((ic, i) => <button key={i} aria-label={`${g.label} tool ${i + 1}`}>{ic}</button>)}
              </div>
              <button className="flex h-[22px] items-center justify-center gap-1 whitespace-nowrap pt-1.5 text-[13px] text-[#4a4a4a]">{g.label}<Caret /></button>
            </section>
          ))}
        </div>
      </div>
    </div>
  );
}

/* ---------- browser tree ---------- */

const Eye = ({ off = false }: { off?: boolean }) => (
  <svg width="20" height="14" viewBox="0 0 20 14" className={off ? "opacity-35" : ""}>
    <path d="M0 7q10-13 20 0-10 13-20 0z" fill="#999" /><circle cx="10" cy="7" r="4.200" fill="#eee" /><circle cx="10" cy="7" r="2.600" fill="#888" />
    {off && <><path d="M2 0l16 14" stroke="#f1f1f1" strokeWidth="4" /><path d="M3 0l15 13" stroke="#888" strokeWidth="1.600" /></>}
  </svg>
);
const Folder = () => <svg width="20" height="17" viewBox="0 0 20 17"><path d="M0 0h9l2 3h9v14H0z" fill="#999" /><path d="M1 2.800h9" stroke="#eee" strokeWidth="1.200" /></svg>;
const Target = () => <svg width="18" height="18" viewBox="0 0 18 18" className="mx-1"><circle cx="9" cy="9" r="7.500" fill="#fff" stroke="#333" strokeWidth="1.300" /><circle cx="9" cy="9" r="3" fill="#222" /></svg>;
const SimsIcon = (
  <svg width="20" height="18" viewBox="0 0 20 18"><defs><linearGradient id="heat"><stop offset="0" stopColor="#19a8ee" /><stop offset=".25" stopColor="#ffe94a" /><stop offset=".6" stopColor="#f0502a" /><stop offset="1" stopColor="#ffd84a" /></linearGradient></defs><path d="M.7.700h18.600v6.600H.7zM.7 10.700h18.600v6.600H.7z" fill="url(#heat)" stroke="#345" strokeWidth="1.400" /></svg>
);
const UnitsIcon = <svg width="20" height="20" viewBox="0 0 20 20"><path d="M2 1h11l5 5v11H2z" fill="#eef1f5" stroke="#445" strokeWidth="1.300" /><path d="M13 1v5h5" fill="#fff" stroke="#445" /><path d="M1 16h18v3.500H1z" fill="#eeb320" stroke="#a87500" /></svg>;
const ModelIcon = <svg width="20" height="20" viewBox="0 0 20 20" fill="#f4f5f8" stroke="#556" strokeWidth="1.100"><path d="M1 4l4-3h6v18H3l-2-2z" /><path d="M9 11l3-3h7v7l-3 4H9z" /><path d="M1 11h8M9 11h7l3-3M16 11v8" fill="none" stroke="#99a" /></svg>;
const CheckIcon = <svg width="20" height="20" viewBox="0 0 20 20"><circle cx="10" cy="10" r="9.300" fill="#58a51c" stroke="#3a6f10" /><path d="M5 10l4 4 7-8" fill="none" stroke="#fff" strokeWidth="2.800" /></svg>;
const StudyIcon = <svg width="20" height="20" viewBox="0 0 20 20"><defs><radialGradient id="h2" gradientUnits="userSpaceOnUse" cx="14" cy="15" r="15"><stop offset="0" stopColor="#ee4a2a" /><stop offset=".3" stopColor="#f4682c" /><stop offset=".55" stopColor="#ffe23a" /><stop offset=".8" stopColor="#3fd0e0" /><stop offset="1" stopColor="#299bee" /></radialGradient></defs><path d="M12 1h7v18H1v-6h11z" fill="url(#h2)" stroke="#334" /></svg>;
const LoadIcon = <svg width="20" height="20" viewBox="0 0 20 20"><rect x="1" y="1" width="18" height="18" fill="#dfe4ea" stroke="#445" strokeWidth="1.400" /><path d="M1 4.500h18" stroke="#556" strokeWidth="2" /><path d="M10 6v6" stroke="#1360c8" strokeWidth="1.800" /><path d="M6.500 9h7L10 13z" fill="#1360c8" /><path d="M4 14.500h12M10 14v3M7 17h6" stroke="#334" strokeWidth="1.500" /></svg>;
const ContactsIcon = <svg width="20" height="9" viewBox="0 0 20 9"><path d="M.7.700h9v7.600h-9z" fill="#fff" stroke="#2b4f9e" strokeWidth="1.400" /><path d="M9.700.700h9.600v7.600H9.700z" fill="#a8c4ee" stroke="#2b4f9e" strokeWidth="1.400" /></svg>;
const ResultsIcon = <svg width="20" height="20" viewBox="0 0 20 20"><path d="M5 1h10v5H5z" fill="#d4252a" /><path d="M5 6h10v4H5z" fill="#f58a1f" /><path d="M5 10h10v3H5z" fill="#f4e22b" /><path d="M5 13h10v3H5z" fill="#3fc653" /><path d="M5 16h10v3H5z" fill="#29a7e0" /><rect x="4.700" y=".7" width="10.600" height="18.600" fill="none" stroke="#333" strokeWidth="1.300" /></svg>;

type Row = { pad: string; exp?: "open" | "closed"; vis?: "on" | "off"; icon: React.ReactNode; text: string; sel?: "part" | "full"; target?: boolean; gap?: string };
const ROWS: Row[] = [
  { pad: "pl-5", exp: "open", icon: SimsIcon, text: "Simulations" },
  { pad: "pl-[42px]", icon: UnitsIcon, text: "Units: Custom" },
  { pad: "pl-[42px]", exp: "open", vis: "on", icon: ModelIcon, text: "Simulation Model 1", sel: "part", target: true },
  { pad: "pl-[65px]", exp: "closed", icon: <Folder />, text: "Named Views" },
  { pad: "pl-[65px]", exp: "closed", vis: "off", icon: <Folder />, text: "Origin" },
  { pad: "pl-[65px]", exp: "open", icon: <Folder />, text: "Model Components" },
  { pad: "pl-[87px]", exp: "closed", vis: "on", icon: <Folder />, text: "Bodies" },
  { pad: "pl-[65px]", exp: "open", icon: StudyIcon, text: "Study 1 - Static Stress", sel: "full" },
  { pad: "pl-[87px]", exp: "closed", vis: "on", icon: <Checker size={20} />, text: "Study Materials" },
  { pad: "pl-[87px]", exp: "closed", vis: "on", icon: LoadIcon, text: "Load Case1", sel: "part", target: true, gap: "gap-3.5" },
  { pad: "pl-[87px]", icon: ContactsIcon, text: "Contacts" },
  { pad: "pl-[87px]", vis: "off", icon: <Mesh s={17} />, text: "Mesh" },
  { pad: "pl-[87px]", icon: ResultsIcon, text: "Results" },
];

function Tree() {
  return (
    <ul className="mt-1 flex flex-col text-[13px] text-[#444]">
      {ROWS.map((r) => (
        <li key={r.text} className={`flex h-[30px] items-center ${r.pad}`}>
          <span className="w-[26px] shrink-0">
            {r.exp === "open" && <svg width="16" height="15" viewBox="0 0 16 15"><path d="M15 1v13H1z" fill="#777" stroke="#333" strokeWidth="1.200" /></svg>}
            {r.exp === "closed" && <svg width="14" height="18" viewBox="0 0 14 18" className="ml-0.5"><path d="M2 1.500L4 1.500 12 9 4 16.500H2z" fill="#f4f4f4" stroke="#333" strokeWidth="1.500" /></svg>}
          </span>
          <div className={`flex items-center ${r.sel === "full" ? "ml-0.5 h-[21px] bg-[#808080]" : "h-[26px] bg-[#f1f1f1]"}`}>
            {r.sel === "full" && <span className="ml-0.5 mr-2">{CheckIcon}</span>}
            {r.vis && <span className="ml-1 mr-1.5"><Eye off={r.vis === "off"} /></span>}
            <span className={`flex h-[21px] items-center whitespace-nowrap pl-1 pr-3 ${r.gap || "gap-[18px]"} ${r.sel === "part" ? "bg-[#8a8a8a]" : ""} ${r.sel ? "text-[14px] font-bold text-white" : ""}`}>
              <span className="flex w-5 justify-center">{r.icon}</span>
              {r.text}
            </span>
            {r.target && <span className="pr-1"><Target /></span>}
          </div>
        </li>
      ))}
    </ul>
  );
}

function PanelHead({ title, plus = false }: { title: string; plus?: boolean }) {
  return (
    <div className={`flex h-[31px] w-[375px] items-center border-2 border-[#cfcfcf] bg-[#f1f1f1] text-[13px] text-[#6c6c6c] ${plus ? "border-t-0" : ""}`}>
      <span className="flex w-[29px] pl-1">{!plus && <svg width="13" height="8" viewBox="0 0 13 8" fill="#333"><path d="M6.500 0v8L0 4zM13 0v8L6.500 4z" /></svg>}</span>
      <h2 className="flex-1">{title}</h2>
      <button aria-label={plus ? "Expand" : "Collapse"}><svg width="12" height="12" viewBox="0 0 12 12"><circle cx="6" cy="6" r="6" fill="#333" /><path d={plus ? "M3 6h6M6 3v6" : "M3 6h6"} stroke="#fff" strokeWidth="1.700" /></svg></button>
      <span className="ml-2 h-3.5 w-1 border-x border-[#888]" />
    </div>
  );
}

function NavBar() {
  return (
    <nav className="flex h-[30px] w-[258px] items-center bg-[#f1f1f1] pl-[3px]">
      <button aria-label="Orbit" className="w-[27px]"><svg width="22" height="22" viewBox="0 0 22 22" fill="none" stroke="#555" strokeWidth="1.300"><path d="M14 6Q13 1 10.500 1 6.500 1 6.500 11t4 10q2.500 0 3.500-5" /><path d="M5 7Q0 9 1 12q1 3 8 3t11-3q1-3-5-5M13 4l-1 4 4 1M14 13l1 4 4-2" /><path d="M10 8v6M7 11h6" stroke="#1a73c8" /></svg></button>
      <Caret />
      <button aria-label="Look at" className="ml-1.5 w-8"><svg width="22" height="22" viewBox="0 0 22 22"><path d="M1 8h20v13H1z" fill="#eee" stroke="#555" strokeWidth="1.600" /><path d="M5 12h12v5H5z" fill="#b7b9c8" stroke="#555" strokeWidth="1.400" /><path d="M2 6l6-5v3l9-3v4" fill="none" stroke="#555" strokeWidth="1.300" /></svg></button>
      <button aria-label="Pan" className="w-8"><svg width="22" height="22" viewBox="0 0 22 22"><path d="M6 21q-2-5-5-8 2-2 5 1L4 5q2-1.500 3 1l1.500 4L9 2q2-1.500 2.800 0l.3 8L14 3q2-1 2.600.500L15.500 11 18 6q2-.5 2 1l-3 9q-1 3-2 5z" fill="#f8f8f8" stroke="#555" strokeWidth="1.400" /></svg></button>
      <button aria-label="Zoom" className="w-8"><svg width="22" height="22" viewBox="0 0 22 22"><circle cx="7.500" cy="10" r="6.200" fill="#dff0f2" stroke="#777" strokeWidth="1.500" /><path d="M12 15l5 5" stroke="#333" strokeWidth="3.200" /><path d="M15 5h7M18.500 1.500v7M15 10.500h7" stroke="#444" strokeWidth="1.300" /></svg></button>
      <button aria-label="Fit" className="w-7"><svg width="22" height="24" viewBox="0 0 22 24"><path d="M1 1h20v22H1z" fill="none" stroke="#666" strokeWidth="1.300" strokeDasharray="3 2.500" /><circle cx="10.500" cy="10" r="8.500" fill="#dff0f2" stroke="#666" strokeWidth="1.500" /><path d="M16 17l5 6" stroke="#333" strokeWidth="3" /></svg></button>
      <Caret />
      <button aria-label="Display settings" className="ml-1.5 mr-0.5"><svg width="22" height="22" viewBox="0 0 22 22"><path d="M1 1h20v16H1z" fill="#d5d8de" stroke="#666" strokeWidth="1.500" /><path d="M4 4h14v10H4z" fill="#8fb2e4" stroke="#447" /><path d="M7 18h8l1 3H6z" fill="#ccc" stroke="#666" /></svg></button>
      <Caret />
      <button aria-label="Grid settings" className="ml-1.5 mr-0.5"><svg width="22" height="22" viewBox="0 0 22 22"><path d="M1 1h20v20H1z" fill="#fafafa" stroke="#555" strokeWidth="1.600" /><path d="M7 10h8v6H7z" fill="#9fb4d8" /><path d="M5 1v20M9 1v20M13 1v20M17 1v20M1 5h20M1 9h20M1 13h20M1 17h20" stroke="#888" strokeWidth="1.100" /></svg></button>
      <Caret />
    </nav>
  );
}

/* ---------- taskbar ---------- */

const Chrome = <svg width="28" height="28" viewBox="0 0 28 28"><circle cx="14" cy="14" r="14" fill="#fbc740" /><path d="M1.900 7A14 14 0 0 0 13 28l6-11-5-3z" fill="#1fa463" /><path d="M14 8h12.600a14 14 0 0 0-.5-1A14 14 0 0 0 1.900 7L8 17.500z" fill="#e34133" /><circle cx="14" cy="14" r="6.500" fill="#fff" /><circle cx="14" cy="14" r="5.200" fill="#4285f4" /></svg>;
const Explorer = <svg width="28" height="24" viewBox="0 0 28 24"><path d="M0 1h11l2 3h15v6H0z" fill="#e3a008" /><path d="M0 5h28v19H0z" fill="#fdd253" /><path d="M5 24V13h18v11h-5v-6h-8v6z" fill="#3a96dd" /></svg>;
const Store = <svg width="30" height="32" viewBox="0 0 30 32"><path d="M8 10V3q0-2 2-2h10q2 0 2 2v7" fill="none" stroke="#ddd" strokeWidth="2.600" /><path d="M0 9h30v21q0 2-2 2H2q-2 0-2-2z" fill="#fff" /><path d="M9 15h5.500v5.500H9z" fill="#f25022" /><path d="M15.500 15H21v5.500h-5.500z" fill="#7fba00" /><path d="M9 21.500h5.500V27H9z" fill="#00a4ef" /><path d="M15.500 21.500H21V27h-5.500z" fill="#ffb900" /></svg>;
const DropboxTile = <span className="flex h-[30px] w-[30px] items-center justify-center rounded bg-white text-[20px] text-[#0061fe]"><FaDropbox /></span>;
const Mail = (
  <span className="relative">
    <svg width="30" height="30" viewBox="0 0 30 30"><path d="M0 10L15 1l15 9v6H0z" fill="#0a5cad" /><path d="M0 10v19h30V10L15 20z" fill="#1f9de6" /><path d="M0 29V11l16 9z" fill="#35b5f2" /><path d="M2 10h26L15 19z" fill="#fff" /></svg>
    <span className="absolute -right-4 top-3.5 rounded-full border border-[#999] bg-[#222] px-1 font-['Open_Sans',sans-serif] text-[15px] font-semibold leading-[19px] text-white">99+</span>
  </span>
);
const Edge = <svg width="30" height="30" viewBox="0 0 30 30"><defs><linearGradient id="ed" x1="0" x2="1"><stop offset="0" stopColor="#1b9de2" /><stop offset=".5" stopColor="#2cc6c9" /><stop offset="1" stopColor="#6ede4a" /></linearGradient></defs><circle cx="15" cy="15" r="15" fill="#1368bd" /><path d="M0 14A15 15 0 0 1 30 13q0 6-7 7-5 0-4-3 1-6-6-7Q4 9 0 14z" fill="url(#ed)" /><path d="M12 17q2-6 7-4-2 6 3 7 4 1 8-3l-1 4q-9 4-13 1-4-1-4-5z" fill="#1c1c1c" /><circle cx="7" cy="23" r="7" fill="#bbb" /><circle cx="7" cy="21" r="2.600" fill="#666" /><path d="M2.500 28q4.500-7 9 0-4.500 3-9 0z" fill="#666" /></svg>;
const Fusion = <svg width="30" height="30" viewBox="0 0 30 30"><rect width="30" height="30" fill="#fde5d0" /><path d="M0 22q15-6 30-2v10H0z" fill="#fff" opacity=".6" /><path d="M9 3h14v5h-8v4h6v5h-6v7H9z" fill="#dd8a3c" /><path d="M9 3l3 3v18H9zM15 8h8V6h-9z" fill="#98500f" /><text x="15" y="28" fontSize="6" fill="#e07a20" fontFamily="Liberation Sans">360</text></svg>;
const Movies = <svg width="30" height="30" viewBox="0 0 30 30"><path d="M0 5L30 0v10H0z" fill="#29c0f5" /><path d="M0 5l7-1-3 7H0zM12 3l6-1-3 9H9zM22 1l5-1-2 11h-6z" fill="#0f7fd0" /><path d="M0 11h30v19H0z" fill="#1167c4" /><path d="M11 14l9 6-9 6z" fill="#fff" /></svg>;

const TASKS: { name: string; icon: React.ReactNode; bar?: boolean; active?: boolean }[] = [
  { name: "Cortana", icon: <span className="h-[19px] w-[19px] rounded-full border-[3px] border-white" /> },
  { name: "Task view", icon: <svg width="20" height="20" viewBox="0 0 20 20" fill="none" stroke="#fff" strokeWidth="1.400"><path d="M1 5.500h11v9H1zM1 0v3h11V0M1 20v-3h11v3M17.500 0v4M17.500 10v10" /><path d="M16 6h3v3h-3z" fill="#fff" /></svg> },
  { name: "Chrome", icon: Chrome, bar: true },
  { name: "Explorer", icon: Explorer, bar: true },
  { name: "Store", icon: Store },
  { name: "Dropbox", icon: DropboxTile },
  { name: "Mail", icon: Mail },
  { name: "Edge", icon: Edge, bar: true },
  { name: "Fusion 360", icon: Fusion, bar: true, active: true },
  { name: "Movies", icon: Movies, bar: true },
  { name: "Spotify", icon: <span className="text-[28px] text-[#1ed760]"><FaSpotify /></span>, bar: true },
];

function Taskbar() {
  return (
    <footer className="flex h-[50px] shrink-0 bg-[#1c1c1c] font-['Open_Sans',sans-serif] text-white">
      <button aria-label="Start" className="flex w-[60px] items-center justify-center"><svg width="20" height="20" viewBox="0 0 20 20" fill="#fff"><path d="M0 2.800L8.500 1.600v7.900H0zM9.500 1.400L20 0v9.500H9.500zM0 10.500h8.500v7.900L0 17.200zM9.500 10.500H20V20L9.500 18.600z" /></svg></button>
      <label className="-mr-px flex w-[430px] items-center gap-[13px] border border-[#bbb] bg-[#f1f1f1] pl-3.5">
        <svg width="22" height="22" viewBox="0 0 22 22" fill="none" stroke="#222" strokeWidth="1.600"><circle cx="14" cy="8" r="6.700" /><path d="M9.500 13L1 21" /></svg>
        <input aria-label="Search" placeholder="Escribe aquí para buscar" className="w-80 bg-transparent text-[18px] outline-none placeholder:text-[#2e2e2e]" />
      </label>
      {TASKS.map((t) => (
        <button key={t.name} aria-label={t.name} className={`flex w-[62px] flex-col items-center ${t.active ? "bg-[#4b4b4b]" : ""}`}>
          <span className="flex h-[47px] items-center pt-0.5">{t.icon}</span>
          {t.bar && <span className={`h-[3px] bg-[#8fa5c2] ${t.active ? "w-full" : "w-[51px]"}`} />}
        </button>
      ))}
      <div className="ml-auto flex items-center pr-[5px] text-[14px]">
        <button aria-label="Get help" className="w-[42px]"><svg width="30" height="28" viewBox="0 0 30 28"><circle cx="13" cy="13" r="11.800" fill="#1e98d7" stroke="#fff" strokeWidth="2.200" /><path d="M9 10q0-4 4-4t4 3.500q0 2-2 3t-2 3.500" fill="none" stroke="#fff" strokeWidth="3" /><circle cx="13" cy="19.500" r="1.900" fill="#fff" /><circle cx="23" cy="19" r="6" fill="#f3a71b" /><path d="M23 17.500v5M23 14.500v2" stroke="#fff" strokeWidth="2" /></svg></button>
        <button aria-label="Hidden icons" className="w-[26px]"><svg width="16" height="9" viewBox="0 0 16 9"><path d="M1 8l7-7 7 7" fill="none" stroke="#fff" strokeWidth="1.500" /></svg></button>
        <button aria-label="Dropbox status" className="w-[30px] text-[19px]"><FaDropbox /></button>
        <button aria-label="Battery" className="w-[30px]"><svg width="20" height="14" viewBox="0 0 20 14" fill="none" stroke="#fff" strokeWidth="1.200"><path d="M5 3.500h12.500v8H5zM18.500 6v3M1 1v3h3V1M2.500 4v8H5" /><path d="M7 5.500h6v4H7z" fill="#fff" /></svg></button>
        <button aria-label="Volume" className="w-[33px]"><svg width="21" height="18" viewBox="0 0 21 18" fill="none" stroke="#fff" strokeWidth="1.200"><path d="M1 6h3l4-4v14l-4-4H1zM11 6q2 3 0 6M14 3.500q4 5.500 0 11M17 1q6 8 0 16" /></svg></button>
        <button aria-label="Network" className="w-[27px]"><svg width="17" height="17" viewBox="0 0 17 17" fill="none" stroke="#ccc" strokeWidth="1.200"><path d="M1 16Q2 2 16 1M5 16Q6 6 16 5M9 16q1-6 7-7" /><circle cx="14.500" cy="14.500" r="2" fill="#fff" /></svg></button>
        <div className="w-9 text-center leading-[22px]">ESP<br />ES</div>
        <div className="w-[100px] text-center leading-[22px]">15:53<br />21-04-2021</div>
        <button aria-label="Notifications" className="relative ml-3 w-[45px]">
          <svg width="20" height="20" viewBox="0 0 20 20"><path d="M0 0h20v16h-8l-4 4v-4H0z" fill="#fff" /><path d="M4 4.500h12M4 8h12M4 11.500h9" stroke="#222" strokeWidth="1.300" /></svg>
          <span className="absolute left-2.5 top-2 flex h-5 w-5 items-center justify-center rounded-full border border-[#999] bg-[#333] text-[13px]">3</span>
        </button>
        <span className="h-[50px] w-px bg-[#777]" />
      </div>
    </footer>
  );
}

export default function App() {
  return (
    <div className="flex h-screen flex-col overflow-hidden bg-white font-['Liberation_Sans',sans-serif]">
      <TitleBar />
      <TabBar />
      <Ribbon />
      <main className="relative flex min-h-0 flex-1 flex-col justify-between">
        <Scene />
        <div className="relative flex justify-between pl-[5px] pr-1 pt-[5px]">
          <aside><PanelHead title="BROWSER" /><Tree /></aside>
          <button className="mt-[145px] flex h-[198px] w-7 flex-col items-center gap-1 bg-[#f1f1f1] pr-0.5 pt-2.5 text-[13px] text-[#444]">
            <svg width="13" height="8" viewBox="0 0 13 8" fill="#333"><path d="M6.500 0v8L0 4zM13 0v8L6.500 4z" /></svg>
            <span className="[writing-mode:vertical-rl]">QUICK SETUP</span>
          </button>
        </div>
        <div className="relative grid grid-cols-[1fr_auto_1fr] items-center pb-[5px]">
          <div className="pl-[5px]"><PanelHead title="COMMENTS" plus /></div>
          <NavBar />
        </div>
      </main>
      <Taskbar />
    </div>
  );
}
